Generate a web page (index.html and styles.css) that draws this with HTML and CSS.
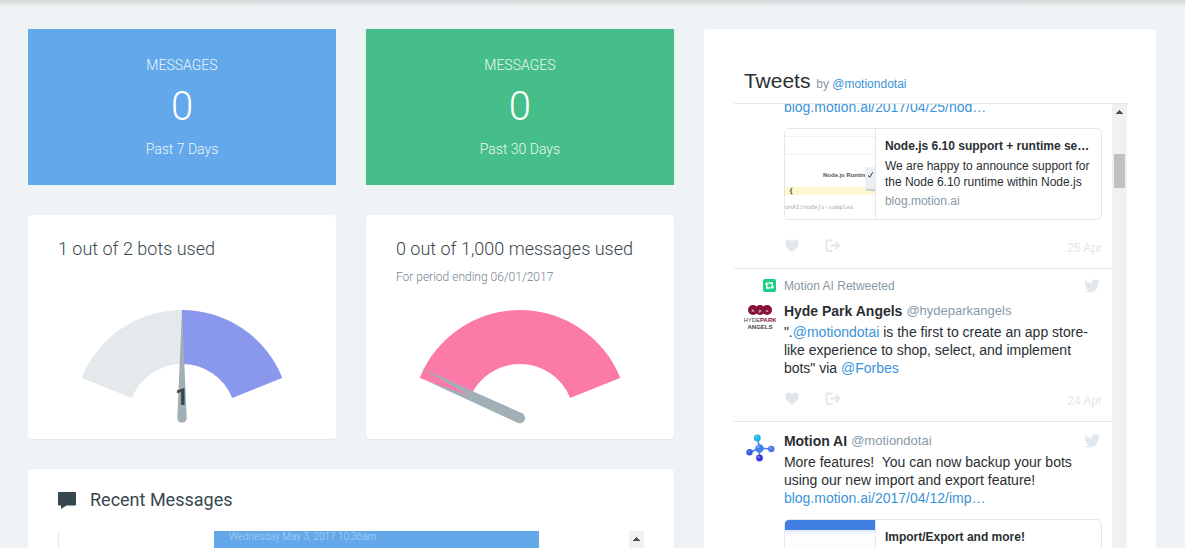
FILE: index.html
```html
<!DOCTYPE html>
<html lang="en">
<head>
<meta charset="utf-8">
<title>Dashboard</title>
<link rel="stylesheet" href="styles.css">
</head>
<body>
<svg class="sprite" aria-hidden="true">
  <symbol id="heart" viewBox="0 0 54 72"><path d="M38.7 12c-7.200 0-10.200 4.500-11.700 8.200C25.500 16.500 22.500 12 15.300 12 7.600 12 1 18.600 1 26.300c0 18.900 19.700 26.300 26 36.700 6.300-10.400 26-17.800 26-36.700C53 18.600 46.400 12 38.700 12z"/></symbol>
  <symbol id="share" viewBox="0 0 16 14"><path d="M7.500 1.500h-5a1 1 0 0 0-1 1v8.500a1 1 0 0 0 1 1h5M5.500 6.500h8.500M10.500 3l3.700 3.500-3.700 3.500" fill="none" stroke="currentColor" stroke-width="1.900"/></symbol>
  <symbol id="bird" viewBox="0 0 24 20"><path d="M23.950 2.570a10 10 0 0 1-2.820.77 4.960 4.960 0 0 0 2.160-2.720c-.95.550-2 .950-3.130 1.180a4.920 4.920 0 0 0-8.380 4.480C7.690 6.090 4.070 4.130 1.640 1.160a4.820 4.820 0 0 0-.67 2.480c0 1.710.87 3.210 2.190 4.100a4.900 4.900 0 0 1-2.230-.62v.06a4.920 4.920 0 0 0 3.950 4.830 5 5 0 0 1-2.210.08 4.940 4.940 0 0 0 4.600 3.420A9.870 9.870 0 0 1 0 17.540a13.990 13.990 0 0 0 7.560 2.210c9.050 0 14-7.500 14-13.980 0-.21 0-.42-.02-.63a9.940 9.940 0 0 0 2.460-2.550z"/></symbol>
</svg>

<main class="dashboard">
  <div class="overview">
    <div class="pair">
      <section class="stat stat-week">
        <h2 class="stat-label">MESSAGES</h2>
        <p class="stat-value">0</p>
        <p class="stat-label">Past 7 Days</p>
      </section>
      <section class="stat stat-month">
        <h2 class="stat-label">MESSAGES</h2>
        <p class="stat-value">0</p>
        <p class="stat-label">Past 30 Days</p>
      </section>
    </div>

    <div class="pair">
      <section class="card usage">
        <h2 class="usage-title">1 out of 2 bots used</h2>
        <svg class="gauge" viewBox="-100 -108 200 114" role="img" aria-label="1 of 2 bots">
          <path fill="#e4e9ec" d="M-100.300-40A108 108 0 0 1 0-108V-54A54 54 0 0 0-50.150-20Z"/>
          <path fill="#8997ec" d="M0-108A108 108 0 0 1 100.300-40L50.150-20A54 54 0 0 0 0-54Z"/>
          <path fill="#a2afb7" d="M0-108L4.700 0A4.700 4.700 0 0 1-4.700 0Z"/>
          <text class="gauge-value" x="0" y="-13" text-anchor="middle">1</text>
        </svg>
      </section>
      <section class="card usage">
        <h2 class="usage-title">0 out of 1,000 messages used</h2>
        <p class="usage-note">For period ending 06/01/2017</p>
        <svg class="gauge" viewBox="-100 -108 200 114" role="img" aria-label="0 of 1,000 messages">
          <path fill="#fb7aa7" d="M-100.300-40A108 108 0 0 1 100.300-40L50.150-20A54 54 0 0 0-50.150-20Z"/>
          <path fill="#a2afb7" d="M-100-51L-46.700-26.500L2.200-4.800A5.200 5.200 0 0 1-2.500 4.700L-53-18.500L-93-37L-51.700-22.700Z"/>
        </svg>
      </section>
    </div>

    <section class="card recent">
      <h2 class="recent-title">
        <svg class="recent-icon" viewBox="0 0 18 17" aria-hidden="true"><path fill="#37474f" d="M1 0H17a1 1 0 0 1 1 1V12.500a1 1 0 0 1-1 1H8.500L3 17V13.500H1a1 1 0 0 1-1-1V1a1 1 0 0 1 1-1Z"/></svg>
        Recent Messages
      </h2>
      <div class="recent-list">
        <div class="thread">
          <p class="bubble">Wednesday May 3, 2017 10:36am</p>
        </div>
        <div class="scrollbar" aria-hidden="true"><svg class="scroll-arrow" viewBox="0 0 7 4"><path d="M3 0h1v1h1v1h1v1h1v1H0V3h1V2h1V1h1z"/></svg></div>
      </div>
    </section>
  </div>

  <section class="card feed">
    <h1 class="feed-title">Tweets <span class="feed-by">by <a href="#motiondotai">@motiondotai</a></span></h1>
    <div class="feed-window">
      <div class="tweets">
        <article class="tweet tweet-first">
          <div class="tweet-body">
            <p class="tweet-text"><a href="#nodejs">blog.motion.ai/2017/04/25/nod…</a></p>
            <div class="link-card">
              <svg class="thumb" viewBox="0 0 90 90" role="img" aria-label="Node.js runtime selector">
                <rect width="90" height="90" fill="#fff"/>
                <path d="M0 7.500H90M0 25.500H90" stroke="#f0f0f2"/>
                <rect y="58" width="90" height="8" fill="#fdf8cf"/>
                <text class="thumb-label" x="38" y="48">Node.js Runtime</text>
                <rect x="81" y="39" width="14" height="23" rx="2" fill="#c9cdd0"/>
                <rect x="80" y="38" width="14" height="22" rx="2" fill="#eceff2"/>
                <path d="M83.500 46.500l1.200 1.800 3-5" stroke="#333" fill="none"/>
                <text class="thumb-brace" x="4" y="64">{</text>
                <text class="thumb-code" x="0" y="80">onAI/nodejs-samples</text>
              </svg>
              <div class="link-info">
                <h3 class="link-title">Node.js 6.10 support + runtime se…</h3>
                <p class="link-text">We are happy to announce support for the Node 6.10 runtime within Node.js</p>
                <p class="link-site">blog.motion.ai</p>
              </div>
            </div>
            <div class="actions">
              <button class="action" aria-label="Like"><svg class="heart" viewBox="0 0 54 54"><use href="#heart" y="-10" width="54" height="72"/></svg></button>
              <button class="action" aria-label="Share"><svg class="share"><use href="#share"/></svg></button>
              <time class="date">25 Apr</time>
            </div>
          </div>
        </article>

        <article class="tweet">
          <p class="retweet">
            <svg class="retweet-icon" viewBox="0 0 13 13" aria-hidden="true"><rect width="13" height="13" rx="2" fill="#19cf86"/><path d="M3.700 4.500V9H7.500M5.500 4H9.300V8.500" fill="none" stroke="#fff" stroke-width="1.400"/><path d="M1.500 5.500L3.700 3 5.900 5.500ZM7.100 7.500H11.500L9.300 10Z" fill="#fff"/></svg>
            <span class="retweet-by">Motion AI Retweeted</span>
            <svg class="bird" role="img" aria-label="Twitter"><use href="#bird"/></svg>
          </p>
          <svg class="avatar" viewBox="0 0 32 32" role="img" aria-label="Hyde Park Angels">
            <g fill="#84123a"><circle cx="9" cy="6" r="5"/><circle cx="16" cy="6" r="5"/><circle cx="23" cy="6" r="5"/></g>
            <g class="hpa-mark" text-anchor="middle"><text x="9" y="8">h</text><text x="16" y="8">p</text><text x="23" y="8">a</text></g>
            <text class="hpa-name" x="16" y="18" text-anchor="middle">HYDE<tspan class="hpa-park">PARK</tspan></text>
            <text class="hpa-name hpa-angels" x="16" y="25" text-anchor="middle">ANGELS</text>
          </svg>
          <div class="tweet-body">
            <p class="author"><b class="name">Hyde Park Angels</b> <span class="handle">@hydeparkangels</span></p>
            <p class="tweet-text">".<a href="#motiondotai">@motiondotai</a> is the first to create an app store-like experience to shop, select, and implement bots" via <a href="#forbes">@Forbes</a></p>
            <div class="actions">
              <button class="action" aria-label="Like"><svg class="heart" viewBox="0 0 54 54"><use href="#heart" y="-10" width="54" height="72"/></svg></button>
              <button class="action" aria-label="Share"><svg class="share"><use href="#share"/></svg></button>
              <time class="date">24 Apr</time>
            </div>
          </div>
        </article>

        <article class="tweet">
          <svg class="avatar" viewBox="0 0 32 32" role="img" aria-label="Motion AI">
            <path d="M15.500 14L13.500 4M15.500 14L5.500 18.500M15.500 14L27 15M15.500 14V24" stroke="#4a7be0" stroke-width="1.500"/>
            <circle cx="15.500" cy="14.500" r="4.200" fill="#3f82ee"/>
            <circle cx="13.300" cy="4" r="3.500" fill="#1fb2f0"/>
            <circle cx="5.500" cy="18.300" r="3.200" fill="#3a58e8"/>
            <circle cx="27.300" cy="15" r="3.200" fill="#4678e8"/>
            <circle cx="15.500" cy="24" r="3.400" fill="#3d35e4"/>
            <g fill="#fff" opacity=".35"><circle cx="14" cy="12.500" r="1.500"/><circle cx="12.500" cy="3" r="1.200"/><circle cx="4.800" cy="17.300" r="1"/><circle cx="26.500" cy="14" r="1"/><circle cx="14.500" cy="23" r="1.200"/></g>
          </svg>
          <div class="tweet-body">
            <p class="author"><b class="name">Motion AI</b> <span class="handle">@motiondotai</span><svg class="bird" role="img" aria-label="Twitter"><use href="#bird"/></svg></p>
            <p class="tweet-text">More features!&nbsp; You can now backup your bots using our new import and export feature! <a href="#import">blog.motion.ai/2017/04/12/imp…</a></p>
            <div class="link-card">
              <svg class="thumb" viewBox="0 0 90 90" role="img" aria-label="Import and export screen">
                <defs><linearGradient id="fade" x2="0" y2="1"><stop stop-color="#dfe7f3"/><stop offset="1" stop-color="#fff"/></linearGradient></defs>
                <rect width="90" height="90" fill="#fdfdfe"/>
                <rect y="10" width="90" height="5" fill="url(#fade)"/>
                <rect width="90" height="10" fill="#407ee2"/>
              </svg>
              <div class="link-info">
                <h3 class="link-title">Import/Export and more!</h3>
              </div>
            </div>
          </div>
        </article>
      </div>
      <div class="scrollbar" aria-hidden="true"><svg class="scroll-arrow" viewBox="0 0 7 4"><path d="M3 0h1v1h1v1h1v1h1v1H0V3h1V2h1V1h1z"/></svg><div class="scroll-thumb"></div></div>
    </div>
  </section>
</main>
</body>
</html>
```
FILE: styles.css
```css
* { box-sizing: border-box; }

body {
  margin: 0;
  height: 100vh;
  overflow: hidden;
  background: linear-gradient(#d2d6d7, #e4e8e9 4px, #eff3f5 8px) #eff3f5;
  color: #37474f;
  font-family: Roboto, "Liberation Sans", sans-serif;
}

h1, h2, h3, p { margin: 0; font-size: inherit; font-weight: inherit; }
a { color: #3b94d9; text-decoration: none; }
.sprite { display: none; }

.dashboard {
  display: grid;
  grid-template-columns: 10fr 7fr;
  gap: 30px;
  height: 100%;
  padding: 29px 29px 0 28px;
}

.overview {
  display: flex;
  flex-direction: column;
  gap: 30px;
  min-width: 0;
}

.pair {
  display: grid;
  grid-template-columns: 1fr 1fr;
  gap: 30px;
}

.card {
  background: #fff;
  border-radius: 4px;
  box-shadow: 0 1px 1px rgba(0, 0, 0, .05);
}

/* Message totals */
.stat {
  padding: 26px 30px;
  color: #fff;
  font-weight: 300;
  text-align: center;
}
.stat-week { background: #62a8ea; }
.stat-month { background: #46be8a; }
.stat-label { font-size: 14px; line-height: 20px; opacity: .9; }
.stat-value { font-size: 40px; line-height: 64px; }

/* Usage gauges */
.usage {
  display: flex;
  flex-direction: column;
  padding: 24px 30px 15px;
}
.usage-title { font-size: 18px; font-weight: 300; line-height: 20px; white-space: nowrap; }
.usage-note { margin: 8px 0 23px; color: #76838f; font-size: 12px; font-weight: 300; line-height: 20px; }
.gauge { display: block; width: 200px; height: 114px; margin: auto auto 0; }
.gauge-value { fill: #37474f; font-size: 24px; font-weight: 700; }

/* Recent messages */
.recent { padding: 20px 30px; }
.recent-title {
  display: flex;
  align-items: center;
  gap: 14px;
  font-size: 18px;
  line-height: 22px;
}
.recent-icon { width: 18px; height: 17px; }
.recent-list {
  display: flex;
  height: 300px;
  margin-top: 20px;
  border-left: 1px solid #e4eaec;
}
.thread { flex: 1; padding: 0 90px 0 155px; }
.bubble {
  padding: 0 15px 16px;
  background: #62a8ea;
  color: rgba(255, 255, 255, .5);
  font-size: 10px;
  font-weight: 300;
  line-height: 12px;
}

.scrollbar { flex: none; width: 15px; background: #f1f1f1; }
.scroll-arrow { display: block; width: 7px; height: 4px; margin: 6px auto; fill: #505050; }
.scroll-thumb { width: 11px; height: 34px; margin: 40px 2px 0; background: #c1c1c1; }

/* Tweets */
.feed {
  display: flex;
  flex-direction: column;
  min-width: 0;
  min-height: 0;
  padding: 40px 29px 0 30px;
  color: #292f33;
  font-family: "Liberation Sans", Arial, sans-serif;
}
.feed-title {
  padding: 0 10px 7px;
  border-bottom: 1px solid #e1e8ed;
  font-size: 21px;
  line-height: 24px;
}
.feed-by { color: #8899a6; font-size: 12px; }
.feed-window { display: flex; flex: 1; min-height: 0; overflow: hidden; }
.tweets { flex: 1; min-width: 0; }

.tweet {
  display: grid;
  grid-template-columns: 32px 1fr;
  column-gap: 8px;
  padding: 10px;
  border-top: 1px solid #e1e8ed;
}
.tweet-first { margin-top: -6px; padding-top: 0; border-top: 0; }
.tweet-body { grid-column: 2; min-width: 0; }
.avatar { width: 32px; height: 32px; margin-top: 2px; }

.retweet {
  display: flex;
  grid-column: 1 / -1;
  gap: 8px;
  height: 14px;
  margin-bottom: 9px;
  color: #8899a6;
  font-size: 12px;
  line-height: 14px;
}
.retweet-icon { width: 13px; height: 13px; margin-left: 19px; }
.bird { width: 16px; height: 14px; margin: 0 2px 0 auto; fill: #e1e8ed; }

.author { display: flex; align-items: center; gap: 4px; line-height: 18px; font-size: 14px; }
.name { font-weight: 700; }
.handle { color: #8899a6; font-size: 13px; }
.tweet-text { font-size: 14px; line-height: 18px; }
.author + .tweet-text { margin-top: 3px; }

.link-card {
  display: flex;
  height: 92px;
  margin: 12px 0 18px;
  overflow: hidden;
  border: 1px solid #e1e8ed;
  border-radius: 5px;
}
.thumb { flex: none; width: 91px; height: 90px; border-right: 1px solid #e1e8ed; }
.link-info { flex: 1; min-width: 0; padding: 9px 9px 0; font-size: 12px; line-height: 16px; }
.link-title { font-weight: 700; white-space: nowrap; }
.link-text { margin: 4px 0 3px; }
.link-site { color: #8899a6; }
.thumb-label { fill: #555; font: 700 6px "Liberation Sans", sans-serif; }
.thumb-brace { fill: #444; font: 700 7px "DejaVu Sans Mono", monospace; }
.thumb-code { fill: #aaa; font: 6px "DejaVu Sans Mono", monospace; }

.actions { display: flex; align-items: center; height: 16px; margin: 14px 0 4px; color: #e1e8ed; }
.link-card + .actions { margin-top: 18px; }
.action { display: block; width: 41px; height: 16px; padding: 0; border: 0; background: none; color: inherit; text-align: left; }
.heart, .share { display: block; width: 16px; height: 14px; fill: currentColor; }
.date { margin-left: auto; padding-top: 3px; font-size: 12px; line-height: 16px; }

.hpa-mark { fill: #fff; font: 5px "Liberation Serif", serif; }
.hpa-name { fill: #444; font: 6px "Liberation Sans", sans-serif; }
.hpa-park { fill: #84123a; font-weight: 700; }
.hpa-angels { font-weight: 700; }
```
